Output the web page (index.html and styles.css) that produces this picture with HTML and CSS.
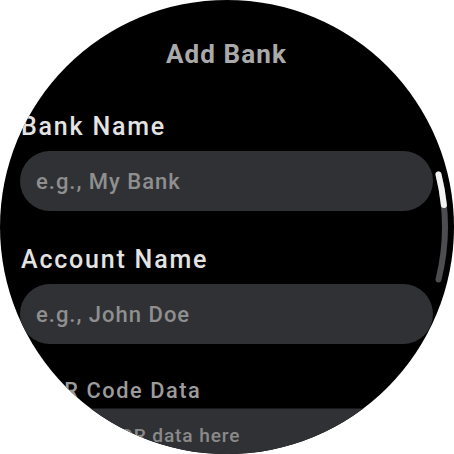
FILE: index.html
```html
<!DOCTYPE html>
<html>
<head>
<meta charset="utf-8">
<link rel="stylesheet" href="styles.css">
</head>
<body>
<div class="watch">
  <div class="column">
    <h1 class="title">Add Bank</h1>
    <div class="group first">
      <div class="label">Bank Name</div>
      <div class="field"><span class="placeholder">e.g., My Bank</span></div>
    </div>
    <div class="group">
      <div class="label">Account Name</div>
      <div class="field"><span class="placeholder">e.g., John Doe</span></div>
    </div>
    <div class="group scaled">
      <div class="label dim">QR Code Data</div>
      <div class="field dimfield"><span class="placeholder">Paste QR data here</span></div>
    </div>
  </div>
  <svg class="scrollbar" width="454" height="454" viewBox="0 0 454 454">
    <path d="M 438.5 174.5 A 218 218 0 0 1 438.5 279.5" fill="none" stroke="#4d4d4f" stroke-width="6" stroke-linecap="round"/>
    <path d="M 438.5 174.5 A 218 218 0 0 1 443.9 205" fill="none" stroke="#f2f2f2" stroke-width="6" stroke-linecap="round"/>
  </svg>
</div>
</body>
</html>
```

FILE: styles.css
```css
html, body {
  margin: 0;
  padding: 0;
  background: #ffffff;
}

.watch {
  position: relative;
  width: 454px;
  height: 454px;
  border-radius: 50%;
  background: #000000;
  overflow: hidden;
  font-family: Roboto, "Noto Sans", sans-serif;
}

.column {
  display: flex;
  flex-direction: column;
  padding: 39px 21px 0 20px;
}

.title {
  margin: 0;
  font-size: 26px;
  line-height: 30px;
  font-weight: 700;
  letter-spacing: 1.1px;
  color: #aaaaaa;
  text-align: center;
}

.group {
  display: flex;
  flex-direction: column;
  gap: 10px;
  margin-top: 35px;
}

.group.first {
  margin-top: 44px;
}

.label {
  font-size: 25px;
  line-height: 28px;
  font-weight: 500;
  letter-spacing: 1.8px;
  color: #e3e3e3;
  padding-left: 1px;
}

.field {
  height: 60px;
  border-radius: 30px;
  background: #303134;
  display: flex;
  align-items: center;
  padding-left: 16px;
}

.placeholder {
  font-size: 22px;
  font-weight: 500;
  letter-spacing: 1px;
  color: #8f8f8f;
}

.scaled {
  transform: scale(0.87);
  transform-origin: 50% 0;
  margin-top: 35px;
  gap: 6px;
}

.label.dim {
  color: #9c9c9c;
}

.dimfield .placeholder {
  color: #8a8a8a;
}

.scrollbar {
  position: absolute;
  left: 0;
  top: 0;
}
```
